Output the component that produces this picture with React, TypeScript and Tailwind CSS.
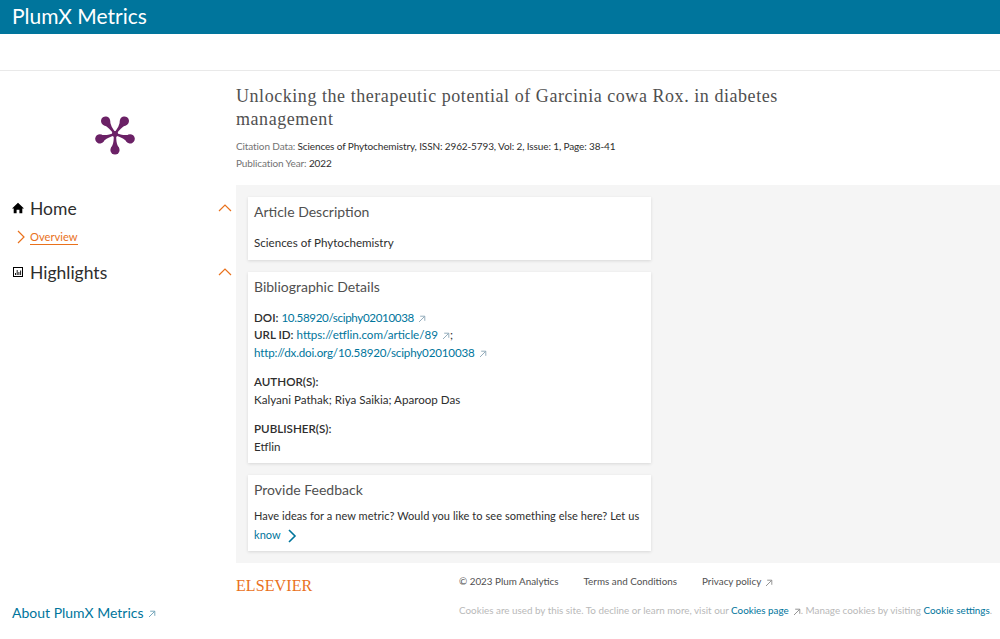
const sans = 'font-["Lato","Open_Sans",sans-serif]'

function ExternalArrow({ className }: { className: string }) {
  return (
    <svg viewBox="0 0 8 8" className={`inline-block w-2 h-2 ml-1 ${className}`} fill="none" stroke="currentColor" strokeWidth="0.9">
      <path d="M1 7 L6.6 1.4 M2.2 1.2 H6.8 V5.8" />
    </svg>
  )
}

function Chevron({ className, dir }: { className: string; dir: 'up' | 'right' }) {
  return (
    <svg viewBox="0 0 14 14" className={className} fill="none" stroke="currentColor" strokeWidth="1.2">
      {dir === 'up' ? <path d="M1 10 L7 4 L13 10" /> : <path d="M4 1 L10 7 L4 13" />}
    </svg>
  )
}

function Logo() {
  const angles = [36, 108, 180, 252, 324]
  return (
    <svg viewBox="0 0 40 40" className="w-10 h-10 text-[#6b2166] overflow-visible" fill="currentColor">
      {angles.map((a) => (
        <g key={a} transform={`rotate(${a} 20 18)`}>
          <path d="M18.7 18 C18.9 12 18.6 8 16 4 H24 C21.4 8 21.1 12 21.3 18 Z" />
          <circle cx="20" cy="2" r="4.6" />
        </g>
      ))}
      <circle cx="20" cy="18" r="3" />
    </svg>
  )
}

function Card({ title, children }: { title: string; children: React.ReactNode }) {
  return (
    <div className="bg-white shadow-[0_1px_3px_rgba(0,0,0,0.12)] px-1.5 pt-[5px]">
      <h2 className="text-[14px] leading-[20px] text-[#505050] mb-[12px]">{title}</h2>
      {children}
    </div>
  )
}

export default function App() {
  return (
    <div className={`w-[1000px] h-[639px] overflow-hidden bg-white flex flex-col ${sans}`}>
      <header className="h-[34px] bg-[#00759c] px-3 flex items-center shrink-0">
        <span className="text-white text-[21px] leading-[30px] -mt-[2px]">PlumX Metrics</span>
      </header>
      <div className="h-[37px] border-b border-[#e9e9e9] shrink-0" />

      <div className="flex flex-1 min-h-0">
        <aside className="w-[236px] shrink-0 flex flex-col pl-3 pb-[16px]">
          <div className="flex justify-center pt-[45px] pr-[18px] mb-[9px] h-[116px]">
            <Logo />
          </div>
          <div className="flex items-center justify-between pr-[4px] h-6">
            <div className="flex items-center gap-[6px]">
              <svg viewBox="0 0 12 12" className="w-3 h-3 text-black" fill="currentColor">
                <path d="M6 0.8 L12 6.4 H10.3 V11.2 H7.4 V7.8 H4.6 V11.2 H1.7 V6.4 H0 Z" />
              </svg>
              <span className="text-[17.5px] leading-6 text-[#2e2e2e] mt-[1px]">Home</span>
            </div>
            <Chevron dir="up" className="w-[14px] h-[14px] text-[#e9711c]" />
          </div>
          <div className="flex items-center mt-[7px] ml-[2px] h-5">
            <Chevron dir="right" className="w-[14px] h-[14px] text-[#e9711c]" />
            <a className="ml-[2px] text-[11.2px] leading-[15px] text-[#e9711c] border-b border-[#e9711c]">Overview</a>
          </div>
          <div className="flex items-center justify-between pr-[4px] h-6 mt-[13px]">
            <div className="flex items-center gap-[7px] ml-[1px]">
              <svg viewBox="0 0 10 10" className="w-[10px] h-[10px] text-black" fill="none" stroke="currentColor">
                <rect x="0.5" y="0.5" width="9" height="9" />
                <path d="M2.5 8 V6 M4.2 8 V3 M5.9 8 V5 M7.6 8 V3.5" strokeWidth="0.9" />
              </svg>
              <span className="text-[17.5px] leading-6 text-[#2e2e2e] mt-[1px]">Highlights</span>
            </div>
            <Chevron dir="up" className="w-[14px] h-[14px] text-[#e9711c]" />
          </div>
          <a className="mt-auto text-[14px] leading-5 text-[#00759c]">
            About PlumX Metrics
            <ExternalArrow className="text-[#6b9fb5]" />
          </a>
        </aside>

        <main className="flex-1 min-w-0">
          <div className="pt-[14px] pr-[200px] h-[114px]">
            <h1 className='font-["Liberation_Serif",serif] text-[18px] leading-[23px] tracking-[0.55px] text-[#505050]'>
              Unlocking the therapeutic potential of Garcinia cowa Rox. in diabetes management
            </h1>
            <p className="text-[10px] leading-[17px] mt-[7px] tracking-[-0.12px] text-[#737373]">
              Citation Data: <span className="text-[#2e2e2e]">Sciences of Phytochemistry, ISSN: 2962-5793, Vol: 2, Issue: 1, Page: 38-41</span>
            </p>
            <p className="text-[10px] leading-[17px] tracking-[-0.12px] text-[#737373]">
              Publication Year: <span className="text-[#2e2e2e]">2022</span>
            </p>
          </div>

          <div className="bg-[#f5f5f5] h-[378px] p-3">
            <div className="w-[403px] flex flex-col gap-3">
              <Card title="Article Description">
                <p className="text-[11.6px] leading-[18px] text-[#2e2e2e] pb-[8px]">Sciences of Phytochemistry</p>
              </Card>
              <Card title="Bibliographic Details">
                <div className="text-[11.6px] leading-[18px] text-[#2e2e2e] pb-[7px]">
                  <p className="leading-[17px]">
                    <b className="font-semibold">DOI:</b> <a className="text-[#00759c] tracking-[-0.35px]">10.58920/sciphy02010038</a>
                    <ExternalArrow className="text-[#8aa5b5]" />
                  </p>
                  <p>
                    <b className="font-semibold">URL ID:</b> <a className="text-[#00759c]">https://etflin.com/article/89</a>
                    <ExternalArrow className="text-[#8aa5b5]" />;
                  </p>
                  <p>
                    <a className="text-[#00759c] tracking-[-0.17px]">http://dx.doi.org/10.58920/sciphy02010038</a>
                    <ExternalArrow className="text-[#8aa5b5]" />
                  </p>
                  <p className="font-semibold mt-[11px]">AUTHOR(S):</p>
                  <p>Kalyani Pathak; Riya Saikia; Aparoop Das</p>
                  <p className="font-semibold mt-[11px]">PUBLISHER(S):</p>
                  <p>Etflin</p>
                </div>
              </Card>
              <Card title="Provide Feedback">
                <p className="text-[11px] leading-[19px] tracking-[0.06px] text-[#2e2e2e] -mt-[6px] pb-[7px]">
                  Have ideas for a new metric? Would you like to see something else here? Let us{' '}
                  <a className="text-[#00759c]">
                    know
                    <Chevron dir="right" className="inline-block w-[14px] h-[14px] ml-1 stroke-[1.6]" />
                  </a>
                </p>
              </Card>
            </div>
          </div>

          <div className="flex">
            <div className="w-[223px] pt-[10px] shrink-0">
              <span className='font-["Liberation_Serif",serif] text-[16px] leading-[20px] tracking-[0.1px] text-[#e9711c]'>ELSEVIER</span>
            </div>
            <div className="pt-[10px] text-[9.85px] leading-[16px] text-[#505050]">
              <div className="flex gap-[25px]">
                <span>© 2023 Plum Analytics</span>
                <span>Terms and Conditions</span>
                <span>
                  Privacy policy
                  <ExternalArrow className="text-[#8a8a8a]" />
                </span>
              </div>
              <p className="mt-[13px] text-[#b9b9b9] whitespace-nowrap">
                Cookies are used by this site. To decline or learn more, visit our <a className="text-[#00759c]">Cookies page</a>
                <ExternalArrow className="text-[#8a8a8a]" />. Manage cookies by visiting <a className="text-[#00759c]">Cookie settings</a>.
              </p>
            </div>
          </div>
        </main>
      </div>
    </div>
  )
}
